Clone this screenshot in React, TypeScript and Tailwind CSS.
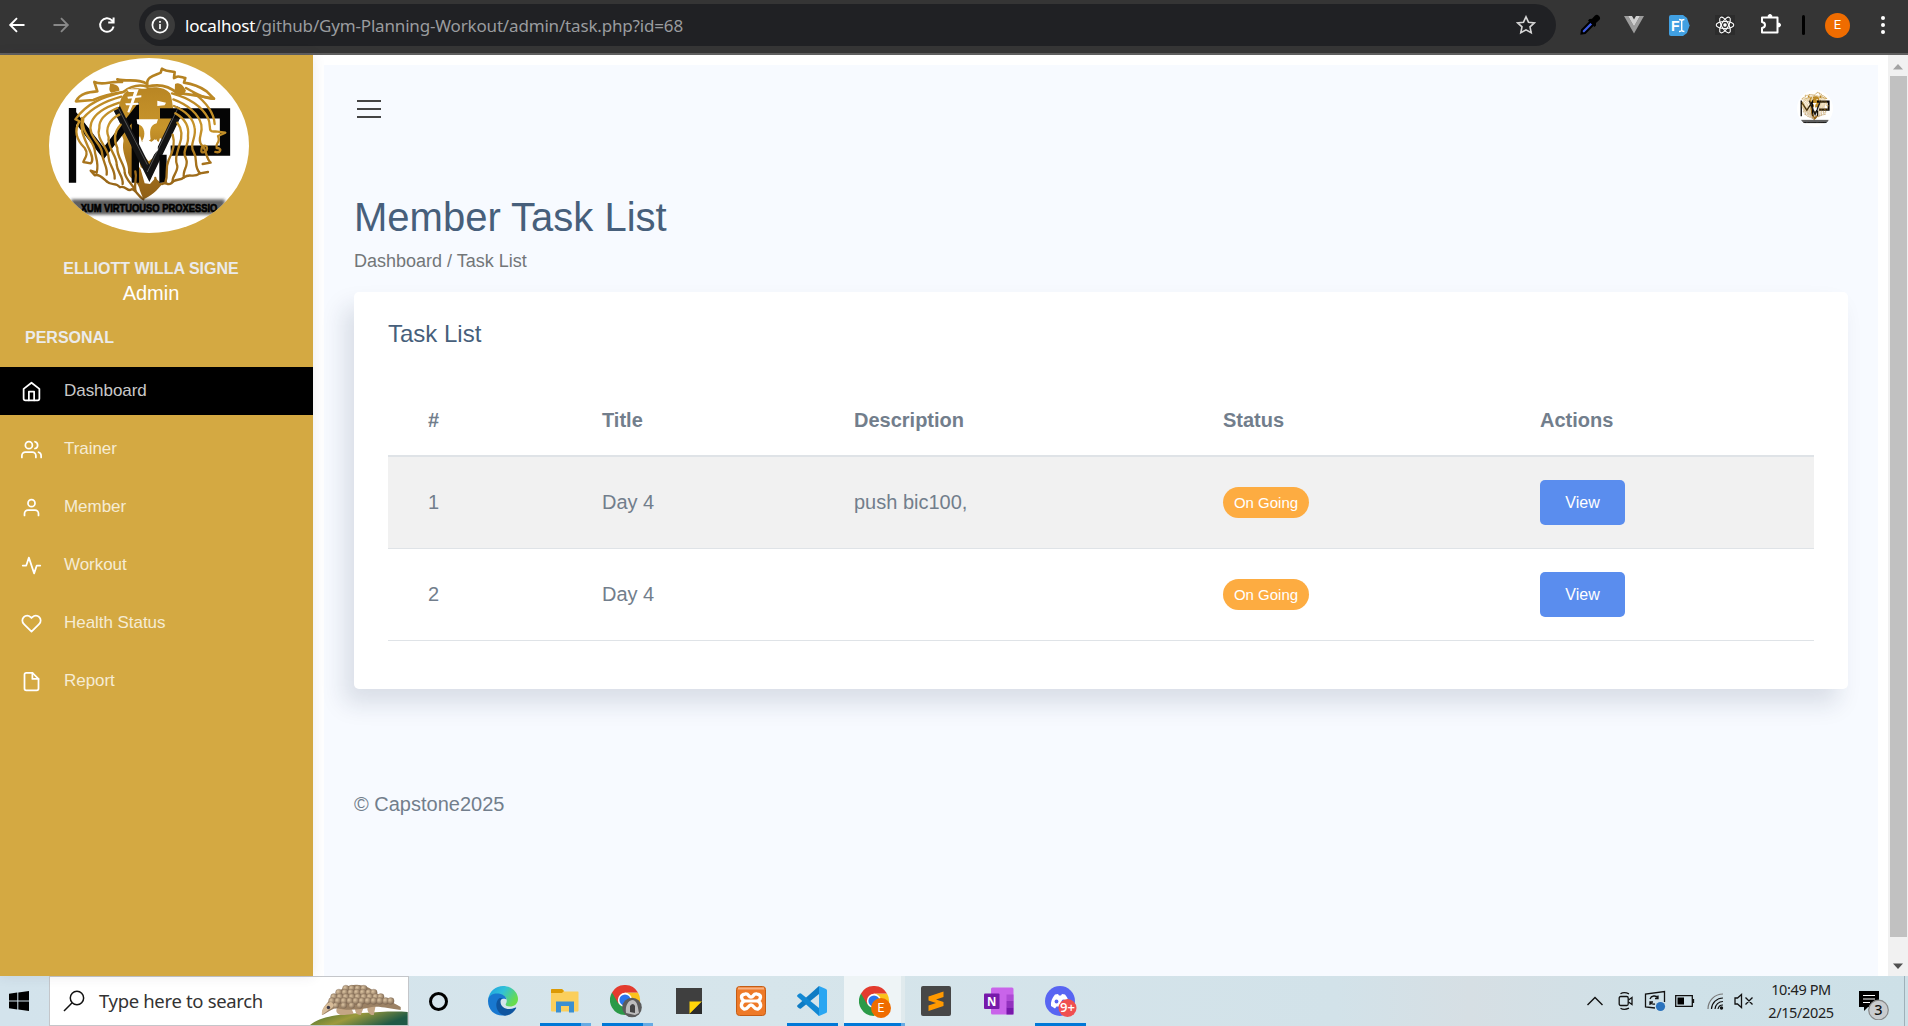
import React from 'react';
import { FiActivity, FiFile, FiHeart, FiHome, FiUser, FiUsers } from 'react-icons/fi';

const NAV = [
  { label: 'Dashboard', Icon: FiHome, active: true },
  { label: 'Trainer', Icon: FiUsers },
  { label: 'Member', Icon: FiUser },
  { label: 'Workout', Icon: FiActivity },
  { label: 'Health Status', Icon: FiHeart },
  { label: 'Report', Icon: FiFile },
];

const TASKS = [
  { id: 1, title: 'Day 4', description: 'push bic100,', status: 'On Going' },
  { id: 2, title: 'Day 4', description: '', status: 'On Going' },
];

function LionLogo({ className }: { className: string }) {
  return (
    <svg viewBox="0 0 200 175" preserveAspectRatio="none" className={className}>
      <defs>
        <linearGradient id="gold" gradientUnits="userSpaceOnUse" x1="0" y1="40" x2="0" y2="430">
          <stop offset="0" stopColor="#b27f20" />
          <stop offset="0.45" stopColor="#c8952b" />
          <stop offset="0.7" stopColor="#a8741c" />
          <stop offset="1" stopColor="#8f5f17" />
        </linearGradient>
        <filter id="soft" x="-10%" y="-50%" width="120%" height="200%">
          <feGaussianBlur stdDeviation="5" />
        </filter>
      </defs>
      <rect width="200" height="175" fill="#fff" />
      <g transform="translate(11 -2) scale(0.3333)">
        {/* crown of the mane */}
        <path
          d="M262 85C240 66 205 78 172 70L186 78C150 74 130 90 103 78L112 106C90 108 60 110 48 136L100 132C130 118 160 112 190 108C210 92 236 84 262 92C300 82 330 92 352 112C380 112 420 120 462 128L440 106C420 92 400 84 372 80L376 66C350 60 356 60 342 66L344 48C326 46 312 44 306 38L302 50C285 58 258 62 262 85Z"
          fill="none"
          stroke="url(#gold)"
          strokeWidth="8"
          strokeLinejoin="round"
        />
        <path d="M150 84C165 82 180 90 178 104L154 110C144 102 150 94 150 84ZM345 84C358 76 372 90 378 104C370 120 352 124 344 112Z" fill="#b98522" />
        {/* face */}
        <path
          d="M206 102C232 90 246 104 262 96C290 90 318 96 330 112C338 128 336 152 344 170L330 196L338 226L310 252L300 246L296 258L284 250L270 262L262 244L246 258L240 240L226 262L232 290L214 318L204 300L190 250C178 220 190 190 176 164C176 140 186 112 206 102Z"
          fill="url(#gold)"
        />
        <path
          d="M192 250C180 290 208 320 204 350C210 372 236 374 240 404L250 430C268 424 296 400 306 384L286 366L270 384L254 382L242 340L222 310L216 262Z"
          fill="url(#gold)"
        />
        <path d="M236 306L252 300L266 316L282 304L296 312L286 338L262 346L242 334Z" fill="#b17d20" />
        {/* monogram */}
        <g fill="none" stroke="#050505" strokeMiterlimit="8">
          <path d="M37.500 156V380M36 170L131 292L226 170V380" strokeWidth="22" />
          <path d="M170 156L268 352L362 156" strokeWidth="23" stroke="#141414" />
          <path d="M300 172H495V284H332" strokeWidth="31" />
          <path d="M309 296V380" strokeWidth="22" />
          <path d="M176 158L262 326M352 160L262 348" strokeWidth="3" stroke="#555" />
        </g>
        {/* muzzle and markings */}
        <g fill="#fff">
          <path d="M230 190L294 190L290 202C266 208 270 232 272 250L262 258L246 256C258 240 256 208 232 204Z" />
          <path d="M250 262L262 252L276 258L290 250L294 282L276 302L262 290L246 280Z" />
          <path d="M292 134L318 140L314 148L292 150Z" />
          <path d="M202 100H236L218 148L208 170L202 168L212 140L222 108H206Z M202 122L244 118V124L204 128Z M196 142L236 140V146L198 148Z" />
        </g>
        {/* strands, left then right */}
        <g fill="none" stroke="url(#gold)" strokeWidth="7" strokeLinejoin="round" strokeLinecap="round">
          <path d="M190 108C130 124 84 138 46 190L58 196C44 220 46 248 74 276C88 296 72 308 70 318L92 322C104 312 92 290 84 272C70 240 60 220 66 186" />
          <path d="M184 122C140 134 96 156 70 186C60 230 100 250 104 282C106 306 118 320 110 350L92 344L104 358C118 352 132 370 140 376" />
          <path d="M178 140C140 152 104 172 94 200C80 240 124 262 126 290C128 320 144 332 140 356" />
          <path d="M172 156C140 170 116 190 118 216C106 250 146 276 146 306C148 330 166 340 164 368" />
          <path d="M178 176C150 190 134 216 146 244C140 274 172 300 170 326C172 350 190 360 188 384" />
          <path d="M182 206C164 226 160 250 172 276C170 304 196 326 194 350C200 376 218 384 226 404" />
          <path d="M140 376C156 392 166 376 180 394C196 386 204 410 214 400C226 396 232 420 250 430" />
          <path d="M336 112C380 124 424 148 444 186C456 210 440 230 466 226L496 230L474 240C484 262 464 260 470 276C488 276 482 292 466 288" />
          <path d="M340 130C384 146 416 174 424 206C430 234 410 248 424 266C440 276 436 306 452 320L428 324" />
          <path d="M342 150C380 166 400 190 404 216C410 246 386 264 402 290C414 312 400 330 420 352L444 348" />
          <path d="M346 172C374 188 388 212 384 240C388 268 364 284 378 308C388 330 366 342 372 364" />
          <path d="M352 200C368 220 366 246 358 268C350 296 344 310 352 330C354 348 336 360 338 376" />
          <path d="M338 236C346 262 338 290 326 312C314 340 326 352 316 380" />
          <path d="M400 110C440 140 462 170 464 204M378 96C420 120 450 130 462 128" />
          <path d="M306 384C318 376 322 390 334 382C344 366 360 376 372 364C390 350 398 368 420 352" />
          <path d="M424 286C424 262 446 266 440 282C434 292 424 290 424 286" />
          <path d="M226 404C222 380 232 366 226 346M286 366C292 386 276 396 270 410" />
        </g>
        <rect x="34" y="430" width="460" height="46" fill="#222" opacity="0.72" filter="url(#soft)" />
        <text
          x="62"
          y="468"
          textLength="410"
          lengthAdjust="spacingAndGlyphs"
          fontFamily="Liberation Sans"
          fontWeight="700"
          fontSize="34"
          fill="#000"
          stroke="#000"
          strokeWidth="2"
        >
          XUM VIRTUOUSO PROXESSIO
        </text>
      </g>
    </svg>
  );
}

function BrowserBar() {
  return (
    <header className="flex h-[55px] shrink-0 items-start border-b-2 border-[#5f5f5f] bg-[#353535] pt-1">
      <div className="flex h-[42px] w-[139px] shrink-0 items-center">
        <svg width="18" height="18" viewBox="0 0 18 18" className="ml-2" fill="none" stroke="#fff" strokeWidth="1.9">
          <path d="M16.5 9H2.5M9 2.2L2.2 9L9 15.8" />
        </svg>
        <svg width="18" height="18" viewBox="0 0 18 18" className="ml-[26px]" fill="none" stroke="#888" strokeWidth="1.9">
          <path d="M1.5 9H15.5M9 2.2L15.8 9L9 15.8" />
        </svg>
        <svg width="18" height="18" viewBox="0 0 18 18" className="ml-[28px]" fill="none" stroke="#fff" strokeWidth="2">
          <path d="M15.6 10.6A6.8 6.8 0 1 1 14 4.4L15 5.6M15.6 1.4V6.6H10.2" />
        </svg>
      </div>
      <div className="flex h-[42px] w-[1417px] shrink-0 items-center rounded-full bg-[#202124] pl-[6px]">
        <span className="flex size-[30px] items-center justify-center rounded-full bg-[#3b3b3b]">
          <svg width="18" height="18" viewBox="0 0 18 18" fill="none" stroke="#fff" strokeWidth="1.7">
            <circle cx="9" cy="9" r="7.6" />
            <path d="M9 8v5M9 5v1.7" />
          </svg>
        </span>
        <span className="ml-[10px] mt-px w-[1320px] whitespace-nowrap font-['Noto_Sans'] text-[17px] leading-6 tracking-[-0.17px] text-[#9a9c9f]">
          <span className="text-white">localhost</span>/github/Gym-Planning-Workout/admin/task.php?id=68
        </span>
        <svg width="20" height="20" viewBox="0 0 20 20" className="ml-[11px]" fill="none" stroke="#d6d6d6" strokeWidth="1.6">
          <path d="M10 1.8l2.5 5.4 5.9.7-4.4 4 1.2 5.9L10 14.9l-5.2 2.9L6 11.9l-4.4-4 5.9-.7z" />
        </svg>
      </div>
      <div className="flex h-[42px] flex-1 items-center">
        <svg width="22" height="22" viewBox="0 0 22 22" className="ml-[23px]">
          <path d="M2.5 19.5L3 16L12 7L15 10L6 19Z" fill="#3d5be0" stroke="#000" strokeWidth="2" />
          <path d="M10.5 5L13 4.8L16 1.6Q18-.2 20 2Q22 4 20.3 6L17 9L17 11.5L15.5 13L9 6.5Z" fill="#000" />
        </svg>
        <svg width="20" height="18" viewBox="0 0 20 18" className="ml-[23px]">
          <path d="M0 0H4L10 10.5L16 0H20L10 17.6Z" fill="#9c9c9c" />
          <path d="M4 0H8L10 3.6L12 0H16L10 10.6Z" fill="#d0d0d0" />
        </svg>
        <svg width="21" height="21" viewBox="0 0 21 21" className="ml-[25px]">
          <path d="M2 0H14L18 3L20.6 10.5L18 18L14 21H2Q0 21 0 19V2Q0 0 2 0Z" fill="#41a0e2" />
          <text x="2" y="15.6" fontFamily="Liberation Sans" fontWeight="700" fontSize="14" fill="#fff">F</text>
          <path d="M10 4.5Q12.5 4.5 12.7 6Q13 4.5 15.4 4.5M12.7 6V15M10 16.5Q12.5 16.5 12.7 15Q13 16.5 15.4 16.5" fill="none" stroke="#fff" strokeWidth="1.4" />
        </svg>
        <svg width="20" height="20" viewBox="0 0 20 20" className="ml-[25px] bg-[#2c2c2c]" fill="none" stroke="#fff" strokeWidth="1.1">
          <ellipse cx="10" cy="10" rx="8.8" ry="3.5" />
          <ellipse cx="10" cy="10" rx="8.8" ry="3.5" transform="rotate(60 10 10)" />
          <ellipse cx="10" cy="10" rx="8.8" ry="3.5" transform="rotate(120 10 10)" />
          <circle cx="10" cy="10" r="1.2" fill="#fff" />
        </svg>
        <svg width="22" height="22" viewBox="0 0 22 22" className="-mt-[2px] ml-[25px]" fill="none" stroke="#fff" strokeWidth="2" strokeLinejoin="round">
          <path d="M2 4.500H17.500V19.500H2V15Q5 14.500 5 12T2 9Z" />
          <path d="M8 3.500A2 2 0 0 1 12 3.500ZM18.500 10A2 2 0 0 1 18.500 14Z" fill="#fff" strokeWidth="1" />
        </svg>
        <span className="ml-[20px] h-[20px] w-[3px] rounded-sm bg-black" />
        <span className="ml-[20px] flex size-[25px] items-center justify-center rounded-full bg-[#ef6c00] font-['Roboto'] text-[13px] text-white">
          E
        </span>
        <svg width="6" height="20" viewBox="0 0 6 20" className="ml-[30px]" fill="#fff">
          <circle cx="3" cy="3" r="2" />
          <circle cx="3" cy="10" r="2" />
          <circle cx="3" cy="17" r="2" />
        </svg>
      </div>
    </header>
  );
}

function Sidebar() {
  return (
    <aside className="z-10 flex w-[313px] shrink-0 flex-col bg-[#d4a942] shadow-[0_0_12px_rgba(60,50,80,0.10)]">
      <LionLogo className="ml-[49px] mt-[3px] h-[175px] w-[200px] shrink-0 rounded-[50%]" />
      <div className="mt-[24px] w-[302px] text-center text-base font-bold leading-6 text-[#ebebeb]">ELLIOTT WILLA SIGNE</div>
      <div className="-mt-px w-[302px] text-center text-[20px] leading-[26px] text-white">Admin</div>
      <div className="ml-[25px] mt-[20px] text-base font-bold leading-6 text-[#ebebeb]">PERSONAL</div>
      <nav className="mt-[17px] flex flex-col gap-[10px]">
        {NAV.map(({ label, Icon, active }) => (
          <a
            key={label}
            className={
              active
                ? 'flex h-12 items-center bg-black pl-[21px] text-[#c9c9c9]'
                : 'flex h-12 items-center pl-[21px] text-[#f6ecd4]'
            }
          >
            <Icon size={21} className="text-white" />
            <span className="ml-[22px] text-[17px] leading-6 tracking-[-0.05px]">{label}</span>
          </a>
        ))}
      </nav>
    </aside>
  );
}

function TaskTable() {
  return (
    <table className="mt-[37px] w-[1426px] table-fixed border-separate border-spacing-0 text-left text-[20px] leading-[30px] text-[#727e8c]">
      <colgroup>
        <col className="w-[174px]" />
        <col className="w-[252px]" />
        <col className="w-[369px]" />
        <col className="w-[317px]" />
        <col className="w-[314px]" />
      </colgroup>
      <thead>
        <tr className="h-[72px]">
          {['#', 'Title', 'Description', 'Status', 'Actions'].map((h) => (
            <th key={h} className="border-b-2 border-[#dfe3e7] py-0 pl-10 font-bold">
              {h}
            </th>
          ))}
        </tr>
      </thead>
      <tbody className="[&_td]:border-b [&_td]:border-[#dfe3e7] [&_td]:pl-10">
        {TASKS.map((t) => (
          <tr key={t.id} className="h-[92px] odd:bg-[#f1f1f1]">
            <td className="pb-[2px]">{t.id}</td>
            <td className="pb-[2px]">{t.title}</td>
            <td className="pb-[2px]">{t.description}</td>
            <td>
              <span className="flex h-[31px] w-[86px] items-center justify-center rounded-full bg-[#fdac41] text-[15px] leading-5 text-white">
                {t.status}
              </span>
            </td>
            <td>
              <button className="flex h-[45px] w-[85px] items-center justify-center rounded-[5px] bg-[#5a8dee] text-base text-white">
                View
              </button>
            </td>
          </tr>
        ))}
      </tbody>
    </table>
  );
}

function Main() {
  return (
    <div className="flex min-w-0 flex-1 bg-white pl-[11px] pt-[10px]">
      <main className="flex w-[1554px] flex-col bg-[#f7faff] pl-[30px] pr-[30px]">
        <div className="flex h-[88px] items-start justify-between pt-[25px]">
          <div className="ml-[3px] mt-[10px] flex w-6 flex-col gap-[6px]">
            <span className="h-[2px] bg-[#444]" />
            <span className="h-[2px] bg-[#444]" />
            <span className="h-[2px] bg-[#444]" />
          </div>
          <LionLogo className="mr-[15px] h-[37px] w-[36px] rounded-[50%]" />
        </div>
        <h1 className="mt-[40px] text-[40px] leading-[48px] text-[#475f7b]">Member Task List</h1>
        <div className="mt-[7px] text-[18px] leading-[27px] text-[#727678]">Dashboard / Task List</div>
        <section className="mt-[17px] flex h-[397px] w-[1494px] shrink-0 flex-col rounded-[5px] bg-white pl-[34px] pt-[27px] shadow-[-10px_15px_23px_0_rgba(25,42,70,0.13)]">
          <h2 className="text-[24px] leading-[29px] text-[#475f7b]">Task List</h2>
          <TaskTable />
        </section>
        <footer className="mt-[100px] text-[20px] leading-[30px] text-[#727e8c]">© Capstone2025</footer>
      </main>
    </div>
  );
}

function Scrollbar() {
  return (
    <div className="flex w-5 shrink-0 flex-col items-center bg-[#f1f1f1]">
      <svg width="10" height="6" viewBox="0 0 10 6" className="mt-[9px]">
        <path d="M0 5.500L5 0L10 5.500Z" fill="#a3a3a3" />
      </svg>
      <div className="mt-[6px] h-[861px] w-[17px] bg-[#c1c1c1]" />
      <svg width="10" height="6" viewBox="0 0 10 6" className="mt-[26px]">
        <path d="M0 0.500L5 6L10 0.500Z" fill="#505050" />
      </svg>
    </div>
  );
}

function Pangolin() {
  const rows = [
    { y: 11.5, xs: [36, 42, 48, 54] },
    { y: 15.5, xs: [29, 35, 41, 47, 53, 59, 64] },
    { y: 20, xs: [24, 30, 36, 42, 48, 54, 60, 66, 71] },
    { y: 24, xs: [22, 28, 34, 40, 46, 52, 58, 64, 70, 76, 81] },
  ];
  return (
    <svg width="98" height="48" viewBox="0 0 98 48">
      <defs>
        <linearGradient id="hill" x1="0" y1="0" x2="1" y2="0.35">
          <stop offset="0" stopColor="#3d6b2c" />
          <stop offset="0.5" stopColor="#9c9a3c" />
          <stop offset="1" stopColor="#1f5a46" />
        </linearGradient>
        <radialGradient id="scale" cx="0.35" cy="0.35" r="0.7">
          <stop offset="0" stopColor="#dcc4a2" />
          <stop offset="1" stopColor="#7d6650" />
        </radialGradient>
      </defs>
      <path d="M0 48C10 40 28 37 52 36C70 35 84 34 98 35V48Z" fill="url(#hill)" />
      <path d="M28 30C24 34 28 39 34 38L44 37L40 28ZM46 28C44 34 46 38 51 38L54 30ZM58 28C56 34 60 39 64 38L66 28Z" fill="#c4a685" />
      <path d="M12 37C12 31 18 24 26 18C34 6 52 4 64 14C72 21 82 25 91 30L91 33C80 32 72 29 62 30C50 33 36 34 26 31C20 33 16 37 12 38Z" fill="#9b8164" />
      {rows.map((r) =>
        r.xs.map((x) => <circle key={`${x}-${r.y}`} cx={x} cy={r.y} r="3.4" fill="url(#scale)" stroke="#7d6650" strokeWidth="0.3" />),
      )}
      {[26, 34, 42, 50].map((x) => (
        <circle key={x} cx={x} cy="28.6" r="3" fill="url(#scale)" />
      ))}
      <path d="M12 38C11 32 16 26 21 25C25 27 24 31 20 32Z" fill="#d6bb98" />
      <circle cx="18.5" cy="30.5" r="1.7" fill="#3c3846" />
    </svg>
  );
}

function ChromeIcon({ children }: { children: React.ReactNode }) {
  return (
    <svg width="34" height="34" viewBox="0 0 34 34" className="ml-[4px] mt-[2px]">
      <path d="M15 15L2 7.500A15 15 0 0 0 15 30L21.500 18.700Z" fill="#2b9a48" />
      <path d="M15 7.500H28A15 15 0 0 1 15 30L21.500 18.700Z" fill="#fbc21c" />
      <path d="M2 7.500A15 15 0 0 1 28 7.500H15L8.500 18.700Z" fill="#e33b2e" />
      <circle cx="15" cy="15" r="7.200" fill="#fff" />
      <circle cx="15" cy="15" r="5.600" fill="#2a75ec" />
      {children}
    </svg>
  );
}

function TaskbarItem({ children, line }: { children: React.ReactNode; line?: React.ReactNode }) {
  return (
    <div className="flex h-[50px] w-[62.2px] shrink-0 flex-col items-center">
      <div className="flex h-[47px] items-center pt-[3px]">{children}</div>
      {line}
    </div>
  );
}

const SplitLine = () => (
  <div className="ml-[4px] flex h-[3px] w-[51px]">
    <span className="w-[41px] bg-[#0078d7]" />
    <span className="w-[10px] bg-[#66abe4]" />
  </div>
);
const FullLine = () => <div className="h-[3px] w-[51px] bg-[#0078d7]" />;

function Taskbar() {
  return (
    <div className="flex h-[50px] shrink-0 bg-[linear-gradient(90deg,#d3e3ec_0%,#d6e5eb_40%,#d2e2e9_70%,#d6dfe4_77%,#cfe1e8_88%,#cde0e7_100%)]">
      <div className="flex w-[49px] shrink-0 items-center pl-[9px]">
        <svg width="20" height="20" viewBox="0 0 20 20" fill="#000">
          <path d="M0 2.700L8.300 1.600V9.500H0ZM9.300 1.500L20 0V9.500H9.300ZM0 10.500H8.300V18.400L0 17.300ZM9.300 10.500H20V20L9.300 18.500Z" />
        </svg>
      </div>
      <div className="flex w-[360px] shrink-0 items-center border border-[#c4c6ca] bg-white pl-[13px]">
        <svg width="22" height="22" viewBox="0 0 22 22" fill="none" stroke="#111" strokeWidth="1.500">
          <circle cx="14" cy="8" r="6.700" />
          <path d="M9.200 12.800L1 21" />
        </svg>
        <span className="ml-[14px] w-[212px] whitespace-nowrap font-['Noto_Sans'] text-[18.5px] leading-6 tracking-[-0.33px] text-[#333]">
          Type here to search
        </span>
        <Pangolin />
      </div>
      <div className="flex shrink-0">
        <div className="-ml-[2px] flex w-[63px]">
          <TaskbarItem>
            <span className="size-[19px] rounded-full border-[3px] border-black" />
          </TaskbarItem>
        </div>
        <TaskbarItem>
          <svg width="30" height="30" viewBox="0 0 30 30" className="ml-[3px]">
            <defs>
              <linearGradient id="edgeTop" x1="0" y1="0" x2="1" y2="0.5">
                <stop offset="0" stopColor="#1b9de2" />
                <stop offset="0.5" stopColor="#31c1d8" />
                <stop offset="1" stopColor="#68dc4c" />
              </linearGradient>
            </defs>
            <path d="M0.2 13C1.500 5 8 0 15 0C24 0 30 6.500 30 13C30 18 26 20.500 22 20.500C18 20.500 17 19 18 17.500C20 14 18 9 12 9C6 9 2 12 0.2 13Z" fill="url(#edgeTop)" />
            <path d="M0 15C0 10 4 7.500 9 7.500C14 7.500 18 10 18.500 13.500C17 12 11.500 12 11 17.500C10.500 24 17 28 22 27.500C12 33 0 27 0 15Z" fill="#1878d0" />
            <path d="M11 12.500C6 17 8 27.500 17 29.800C21 29.500 25.500 27 28 22.500C28.500 21.500 28 21.300 27 21.800C20 25 12.500 22 12.500 15.500C12.500 14 13.500 12.800 14.500 12.300C13 12 12 12 11 12.500Z" fill="#0f559f" />
          </svg>
        </TaskbarItem>
        <TaskbarItem line={<SplitLine />}>
          <svg width="28" height="24" viewBox="0 0 28 24" className="ml-[3px]">
            <path d="M0 1Q0 0 1 0H11L13.500 2.500H27Q27.500 2.500 27.500 3.500V21.500Q27.500 22.500 26.500 22.500H1Q0 22.500 0 21.500Z" fill="#fbcf5c" />
            <path d="M0 1Q0 0 1 0H11L13 2L11 4H0Z" fill="#dc9a04" />
            <path d="M5 12.500H23V23.500H18V17H10V23.500H5Z" fill="#3a8fd2" />
          </svg>
        </TaskbarItem>
        <TaskbarItem line={<SplitLine />}>
          <ChromeIcon>
            <circle cx="22" cy="22.500" r="9.800" fill="#5c5c5c" />
            <path d="M16 28C15 21 18 15 23 15C28 16 28 24 29 28L25 30Z" fill="#bdbdbd" />
            <path d="M20 27V21Q23 17 25 21V28" fill="#444" />
          </ChromeIcon>
        </TaskbarItem>
        <TaskbarItem>
          <svg width="26" height="26" viewBox="0 0 26 26" className="ml-[2px]">
            <path d="M0 0H26V26H0Z" fill="#3f3f3f" />
            <path d="M13.500 13.500H26L13.500 26Z" fill="#ffd60a" />
            <path d="M26 13.500V26H13.500Z" fill="#2b2b2b" />
          </svg>
        </TaskbarItem>
        <TaskbarItem>
          <svg width="30" height="30" viewBox="0 0 30 30" className="ml-[2px]">
            <rect x="0.500" y="0.500" width="29" height="29" rx="3" fill="#ee7a28" stroke="#c45c14" />
            <path d="M2 1.500H28V3.500H2Z" fill="#f7b183" />
            <path
              d="M9 8C13 7 12 11 15 11S17 7 21 8C26 9 25 13 22 15C25 17 26 21 22 23C18 24 18 19 15 19S12 24 8 23C4 21 5 17 8 15C5 13 4 9 9 8Z"
              fill="none"
              stroke="#fff"
              strokeWidth="3.400"
            />
            <path d="M9 15H21" stroke="#fff" strokeWidth="3" />
          </svg>
        </TaskbarItem>
        <TaskbarItem line={<FullLine />}>
          <svg width="30" height="30" viewBox="0 0 30 30">
            <path d="M22 0L22 8L4 22.500Q3 23 2 22.300L0.500 21Q-.3 20 .5 19.200Z" fill="#0f7cc4" />
            <path d="M22 30L22 22L4 7.500Q3 7 2 7.700L0.500 9Q-.3 10 .5 10.800Z" fill="#1288d3" />
            <path d="M22 0L29 3Q30 3.500 30 4.500V25.500Q30 26.500 29 27L22 30Q20.500 29.500 22 28.500Z" fill="#2aa6f2" />
          </svg>
        </TaskbarItem>
        <div className="flex h-[50px] w-[62.2px] shrink-0 flex-col pl-px">
          <div className="flex h-[47px] w-[61px] border-r-4 border-[#e0eaed] bg-[#eef4f6] pl-[11px] pt-[8px]">
            <ChromeIcon>
              <circle cx="22" cy="22" r="10" fill="#ef6c00" />
              <text x="22" y="26.200" textAnchor="middle" fontFamily="Roboto" fontSize="12" fill="#fff">E</text>
            </ChromeIcon>
          </div>
          <div className="flex h-[3px] w-[61px]">
            <span className="w-[57px] bg-[#0078d7]" />
            <span className="w-[4px] bg-[#66abe4]" />
          </div>
        </div>
        <TaskbarItem>
          <svg width="30" height="30" viewBox="0 0 30 30">
            <rect width="30" height="30" rx="2" fill="#474747" />
            <path d="M7.500 10.500L22.500 5.500V11L15 13.500L22.500 16V20L7.500 25V19.500L15 17L7.500 14.500Z" fill="#f90" />
          </svg>
        </TaskbarItem>
        <TaskbarItem>
          <svg width="30" height="28" viewBox="0 0 30 28">
            <rect x="7" y="0.500" width="22.500" height="27" rx="1.500" fill="#c964ea" />
            <path d="M22.500 7.500H29.500V14H22.500Z" fill="#ae4bd5" />
            <path d="M22.500 14H29.500V20.500H22.500Z" fill="#9332bf" />
            <path d="M22.500 20.500H29.500V27.500H22.500Z" fill="#7719aa" />
            <rect y="6.500" width="15.500" height="15.500" rx="1" fill="#7719aa" />
            <text x="7.700" y="18.500" textAnchor="middle" fontFamily="Open Sans" fontWeight="700" fontSize="11.500" fill="#fff">N</text>
          </svg>
        </TaskbarItem>
        <TaskbarItem line={<FullLine />}>
          <svg width="32" height="32" viewBox="0 0 32 32">
            <circle cx="15" cy="16" r="15" fill="#5865f2" />
            <path d="M10 9.500L13 9L14 10.500H16L17 9L20 9.500C23 13 24.500 17 24 21L20 23.500L18.500 21.500H11.500L10 23.500L6 21C5.500 17 7 13 10 9.500Z" fill="#fff" />
            <circle cx="11.500" cy="16.500" r="1.900" fill="#5865f2" />
            <circle cx="18.500" cy="16.500" r="1.900" fill="#5865f2" />
            <circle cx="22.500" cy="23" r="9" fill="#f04f50" />
            <text x="22.500" y="27.300" textAnchor="middle" fontFamily="Open Sans" fontWeight="600" fontSize="13" fill="#fff">9+</text>
          </svg>
        </TaskbarItem>
      </div>
      <div className="ml-auto flex items-center pr-[3px]">
        <svg width="16" height="10" viewBox="0 0 16 10" fill="none" stroke="#111" strokeWidth="1.400">
          <path d="M.5 9L8 1.500L15.500 9" />
        </svg>
        <svg width="16" height="20" viewBox="0 0 16 20" className="ml-[15px]" fill="none" stroke="#111" strokeWidth="1.300">
          <rect x="1.200" y="5.500" width="9" height="9" rx="1.500" />
          <path d="M10.500 9L14 6.500V13.500L10.500 11M2.500 2.800Q6 .4 11 2.800M2.500 17.200Q6 19.600 11 17.200" />
        </svg>
        <svg width="22" height="22" viewBox="0 0 22 22" className="ml-[10px]" fill="none" stroke="#111" strokeWidth="1.300">
          <path d="M11 18L1.500 17V4L20.500 1.500V12" />
          <path d="M14 8A4.500 4.500 0 0 0 6 9M14 5.500V8.500H11M6 12A4.500 4.500 0 0 0 11 14M6 15V12H9" />
          <circle cx="16.500" cy="16.500" r="4.600" fill="#2b73bd" stroke="none" />
        </svg>
        <svg width="20" height="12" viewBox="0 0 20 12" className="ml-[9px]" fill="none" stroke="#111" strokeWidth="1.300">
          <path d="M.7.7H17.300V11.300H.7ZM18.500 4V8" />
          <path d="M2.500 2.500H9V9.500H2.500Z" fill="#000" stroke="none" />
        </svg>
        <svg width="17" height="17" viewBox="0 0 17 17" className="ml-[12px]" fill="none" stroke="#111" strokeWidth="1.200">
          <path d="M1 16A15 15 0 0 1 16 1" stroke="#777" />
          <path d="M4.500 16A11.500 11.500 0 0 1 16 5M8 16A8 8 0 0 1 16 8.500M11 16A5 5 0 0 1 16 12" />
          <circle cx="14.500" cy="15" r="1.700" fill="#111" stroke="none" />
        </svg>
        <svg width="20" height="16" viewBox="0 0 20 16" className="ml-[10px]" fill="none" stroke="#111" strokeWidth="1.300">
          <path d="M1 5H3.500L7.500 1.500V14.500L3.500 11H1ZM11.500 4.500L18.500 11.500M18.500 4.500L11.500 11.500" />
        </svg>
        <div className="ml-[11px] w-[72px] whitespace-nowrap text-center font-['Noto_Sans'] text-[14.5px] leading-[23px] tracking-[-0.38px] text-[#222]">
          <div>10:49 PM</div>
          <div>2/15/2025</div>
        </div>
        <svg width="32" height="32" viewBox="0 0 32 32" className="ml-[21px] mt-[6px]">
          <path d="M1 3H21V19H10L6 23V19H1Z" fill="#000" />
          <path d="M5 7.500H17M5 11H17M5 14.500H12" stroke="#fff" strokeWidth="1.200" />
          <circle cx="20.500" cy="22" r="9.800" fill="#c9cccf" stroke="#888" strokeWidth="1.200" />
          <text x="20.500" y="27" textAnchor="middle" fontFamily="Noto Sans" fontWeight="500" fontSize="14.500" fill="#111">3</text>
        </svg>
        <span className="ml-[14px] h-[50px] w-px bg-[#9fb0b8]" />
      </div>
    </div>
  );
}

export default function App() {
  return (
    <div className="flex h-[1026px] w-[1908px] flex-col overflow-hidden bg-white font-['Liberation_Sans',Arial,sans-serif]">
      <BrowserBar />
      <div className="flex h-[921px] shrink-0">
        <Sidebar />
        <Main />
        <Scrollbar />
      </div>
      <Taskbar />
    </div>
  );
}
